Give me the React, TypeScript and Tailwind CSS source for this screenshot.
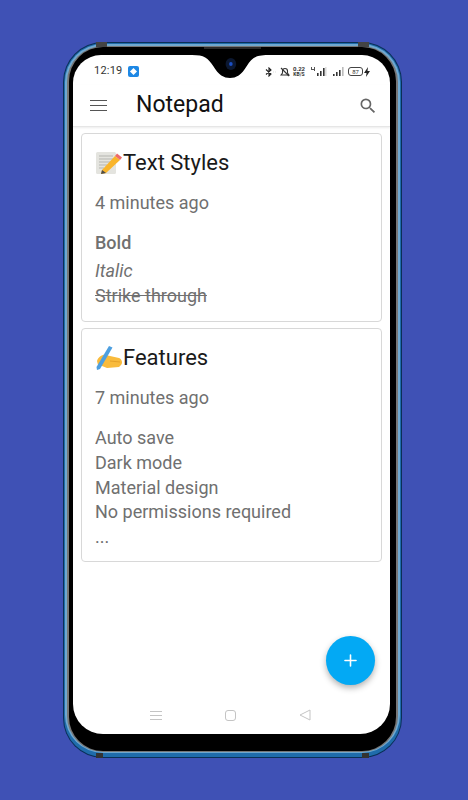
import { Plus } from "lucide-react";

function MemoEmoji() {
  return (
    <svg width="28" height="26" viewBox="0 0 28 26" className="shrink-0">
      <rect x="1" y="2" width="20" height="22" rx="1.5" fill="#e4e4df" />
      <path d="M4 6h14M4 9h14M4 12h12M4 15h8M4 18h5" stroke="#b5b5b0" strokeWidth="1" />
      <path d="M7 20 L20 6 L25 10 L11 23 L6 24 Z" fill="#f9b52c" />
      <path d="M20 6 L22 3.5 L27 7.5 L25 10 Z" fill="#ee6a6a" />
      <path d="M6 24 L7 20 L11 23 Z" fill="#4b4b4b" />
    </svg>
  );
}

function WritingEmoji() {
  return (
    <svg width="28" height="26" viewBox="0 0 28 26" className="shrink-0">
      <path d="M2 16 C3 12 8 9 11 10 L15 11 L24 13 C27 14 28 18 26 20 L24 22 L12 23 L7 21 L3 20 Z" fill="#f9bb3c" />
      <path d="M15 16 L25 17" stroke="#e09a24" strokeWidth="0.8" />
      <path d="M2 25 L1.5 22 L14 1 L17.5 2.5 L5 24 Z" fill="#4d9fe0" />
    </svg>
  );
}

function StatusIcons() {
  return (
    <div className="flex items-center text-[#333]">
      <svg width="11" height="10" viewBox="0 0 11 10" fill="none" stroke="#222" strokeWidth="1.1">
        <path d="M1 2.5 L6 7 L4 9 V1 L6 3 L1 7.5" />
        <path d="M8 5h.1M10 5h.1" strokeWidth="1.6" />
      </svg>
      <svg width="10" height="10" viewBox="0 0 10 10" fill="none" stroke="#333" strokeWidth="1.1" className="ml-[4px]">
        <path d="M1 8h8L7.5 6V4a2.5 2.5 0 0 0-5 0v2Z" />
        <path d="M1 1 L9 9" />
      </svg>
      <div className="ml-[3px] flex w-[12px] flex-col items-center text-[6px] font-bold leading-[6px]">
        <span>0.22</span>
        <span className="text-[5px] leading-[5px]">KB/S</span>
      </div>
      <svg width="17" height="11" viewBox="0 0 17 11" className="ml-[5px]">
        <path d="M7 10V7h1.6v3ZM10 10V5h1.6v5ZM13 10V2h1.6v8Z" fill="#333" />
        <path d="M15.5 10V1h.8v9Z" fill="#bbb" />
        <path d="M4 1h1v4H4ZM1 1h1v2h2v1H1Z" fill="#555" />
      </svg>
      <svg width="13" height="11" viewBox="0 0 13 11" className="ml-[5px]">
        <path d="M1 8h1.6v2H1ZM4 6h1.6v4H4ZM7 4h1.6v6H7Z" fill="#333" />
        <path d="M10 1h1.6v9H10Z" fill="#bbb" />
      </svg>
      <div className="ml-[3px] flex items-center gap-[1px]">
        <div className="flex h-[9px] w-[15px] items-center justify-center rounded-[3px] border border-[#444] text-[6px] leading-none text-[#333]">
          87
        </div>
        <svg width="6" height="10" viewBox="0 0 6 10">
          <path d="M4 0 L0 6 H2.5 L2 10 L6 4 H3.5 Z" fill="#222" />
        </svg>
      </div>
    </div>
  );
}

function NoteCard({ title, emoji, time, children }: { title: string; emoji: React.ReactNode; time: string; children: React.ReactNode }) {
  return (
    <div className="rounded-[4px] border border-[#d8d8d8] bg-white pl-[13px] pr-[12px]">
      <div className="flex h-[54px] items-center pt-[3px] text-[22px] text-[#1a1a1a]">
        {emoji}
        <span>{title}</span>
      </div>
      <div className="mt-[3px] text-[18px] leading-[24px] text-[#707070]">{time}</div>
      <div className="mt-[16px] text-[18px] leading-[24.7px] text-[#707070]">{children}</div>
    </div>
  );
}

export default function App() {
  return (
    <div className="flex h-[800px] w-[468px] items-center justify-center bg-[#3f51b5] pr-[3px] font-['Roboto',sans-serif]">
      <div className="relative h-[716px] w-[339px] rounded-[40px] bg-[#0a2f57] p-[1px]">
        {/* antenna bands */}
        <div className="absolute left-[33px] top-0 h-[5px] w-[11px] bg-[#444]" />
        <div className="absolute right-[33px] top-0 h-[5px] w-[11px] bg-[#444]" />
        <div className="absolute bottom-0 left-[33px] h-[5px] w-[7px] bg-[#333]" />
        <div className="absolute bottom-0 right-[33px] h-[5px] w-[7px] bg-[#333]" />
        {/* speaker slit */}
        <div className="absolute left-[141px] top-[5px] h-[2px] w-[57px] bg-[#2a2a2a]" />
        <div className="h-full rounded-[39px] bg-[#1f6cab] p-[1px] pb-[4px]">
          <div className="h-full rounded-[38px] bg-[#6fa8d0] px-[2px] pb-[1px] pt-[2px]">
            <div className="h-full rounded-[36px] bg-[#777] px-[2px] py-[1px]">
              <div className="h-full rounded-[34px] bg-black pb-[17px] pl-[4px] pr-[6px] pt-[8px]">
                <div className="relative flex h-full flex-col overflow-hidden rounded-b-[30px] rounded-t-[28px] bg-white">
                  {/* notch */}
                  <svg className="absolute left-[119px] top-0" width="76" height="26" viewBox="0 0 86 26" preserveAspectRatio="none">
                    <path d="M0 0 C14 0 18 3 24 11 C30 20 36 23 43 23 C50 23 56 20 62 11 C68 3 72 0 86 0 Z" fill="#000" />
                    <circle cx="44" cy="9" r="6" fill="#0b1730" />
                    <circle cx="44" cy="9" r="2" fill="#1b4fc4" />
                  </svg>
                  <div className="flex h-[30px] shrink-0 items-center justify-between pl-[21px] pr-[20px] pt-[3px]">
                    <div className="flex items-center gap-[6px]">
                      <span className="text-[11px] tracking-[0.2px] text-[#333]">12:19</span>
                      <div className="flex h-[11px] w-[11px] items-center justify-center rounded-[2px] bg-[#1e88e5]">
                        <div className="h-[5px] w-[5px] rotate-45 bg-white" />
                      </div>
                    </div>
                    <StatusIcons />
                  </div>
                  <div className="flex h-[42px] shrink-0 items-center border-b border-[#e6e6e6] pl-[17px] pr-[12px] shadow-[0_1px_2px_rgba(0,0,0,0.08)]">
                    <div className="flex w-[17px] flex-col gap-[3.5px]">
                      <div className="h-[1.5px] bg-[#555]" />
                      <div className="h-[1.5px] bg-[#555]" />
                      <div className="h-[1.5px] bg-[#555]" />
                    </div>
                    <span className="ml-[29px] text-[23px] font-normal text-[#111]">Notepad</span>
                    <svg width="20" height="20" viewBox="0 0 24 24" fill="#666" className="ml-auto">
                      <path d="M15.5 14h-.79l-.28-.27A6.47 6.47 0 0 0 16 9.5 6.5 6.5 0 1 0 9.5 16c1.61 0 3.09-.59 4.23-1.57l.27.28v.79l5 4.99L20.49 19l-4.99-5zm-6 0C7.01 14 5 11.99 5 9.5S7.01 5 9.5 5 14 7.01 14 9.5 11.99 14 9.5 14z" />
                    </svg>
                  </div>
                  <div className="flex flex-col gap-[6px] px-[8px] pt-[6px]">
                    <NoteCard title="Text Styles" emoji={<MemoEmoji />} time="4 minutes ago">
                      <div className="font-medium">Bold</div>
                      <div className="mt-[3px] italic">Italic</div>
                      <div className="mt-[1px] line-through">Strike through</div>
                      <div className="h-[12px]" />
                    </NoteCard>
                    <NoteCard title="Features" emoji={<WritingEmoji />} time="7 minutes ago">
                      <div>Auto save</div>
                      <div>Dark mode</div>
                      <div>Material design</div>
                      <div>No permissions required</div>
                      <div>...</div>
                      <div className="h-[11px]" />
                    </NoteCard>
                  </div>
                  <button className="absolute bottom-[49px] right-[15px] flex h-[49px] w-[49px] items-center justify-center rounded-full bg-[#03a9f4] text-white shadow-[0_3px_6px_rgba(0,0,0,0.3)]">
                    <Plus size={19} strokeWidth={2} />
                  </button>
                  <div className="absolute bottom-[13px] left-0 right-0 flex items-center justify-center gap-[63px] pr-[3px]">
                    <div className="flex w-[12px] flex-col gap-[3px]">
                      <div className="h-px bg-[#c4c4c4]" />
                      <div className="h-px bg-[#c4c4c4]" />
                      <div className="h-px bg-[#c4c4c4]" />
                    </div>
                    <div className="h-[11px] w-[11px] rounded-[3px] border border-[#c4c4c4]" />
                    <svg width="12" height="12" viewBox="0 0 12 12" fill="none" stroke="#c4c4c4" strokeWidth="1">
                      <path d="M11 1 V11 L1 6 Z" />
                    </svg>
                  </div>
                </div>
              </div>
            </div>
          </div>
        </div>
      </div>
    </div>
  );
}
